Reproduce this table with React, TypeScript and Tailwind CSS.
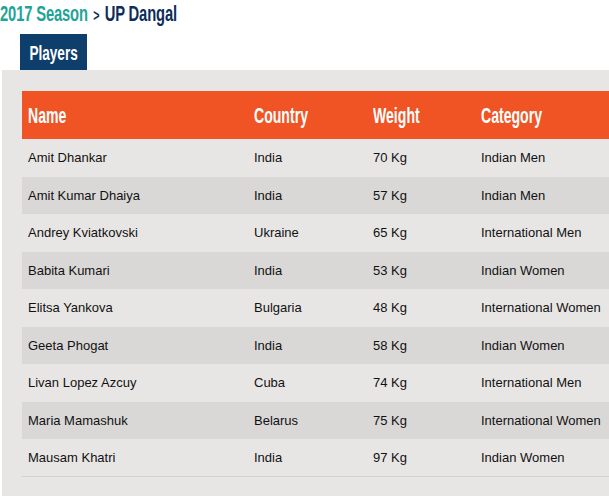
const players = [
  ["Amit Dhankar", "India", "70 Kg", "Indian Men"],
  ["Amit Kumar Dhaiya", "India", "57 Kg", "Indian Men"],
  ["Andrey Kviatkovski", "Ukraine", "65 Kg", "International Men"],
  ["Babita Kumari", "India", "53 Kg", "Indian Women"],
  ["Elitsa Yankova", "Bulgaria", "48 Kg", "International Women"],
  ["Geeta Phogat", "India", "58 Kg", "Indian Women"],
  ["Livan Lopez Azcuy", "Cuba", "74 Kg", "International Men"],
  ["Maria Mamashuk", "Belarus", "75 Kg", "International Women"],
  ["Mausam Khatri", "India", "97 Kg", "Indian Women"],
];

// no condensed family installed, so squeeze a bold sans horizontally
const condensed = "inline-block font-['Liberation_Sans',Arial,sans-serif] font-bold";

export default function App() {
  return (
    <div className="h-[496px] w-[609px] overflow-hidden bg-white">
      <div className="h-[34px] whitespace-nowrap">
        <div className={`${condensed} origin-left scale-x-[0.67] pt-[1px] text-[22px] leading-[26px] tracking-[-0.2px]`}>
          <span className="text-[#23a397]">2017 Season</span>
          <span className="mx-[8px] text-[16px] text-[#0d2d5a]">&gt;</span>
          <span className="text-[#0d2d5a]">UP Dangal</span>
        </div>
      </div>
      <div className="ml-5 flex h-9 w-[67px] items-center justify-center bg-[#0d3e6c]">
        <span className={`${condensed} origin-center scale-x-[0.68] pt-[1px] text-[20px] text-white`}>Players</span>
      </div>
      <div className="ml-[2px] h-[426px] overflow-hidden bg-[#e8e6e5] pl-5 pt-[21px]">
        <table className="w-[640px] table-fixed border-collapse font-['Liberation_Sans',Arial,sans-serif] text-[13px] text-[#111]">
          <thead>
            <tr className="h-12 bg-[#f05324] text-left">
              {["Name", "Country", "Weight", "Category"].map((h, i) => (
                <th
                  key={h}
                  className={`px-[6px] pt-[1px] ${["w-[226px]", "w-[119px]", "w-[108px]", "w-[187px]"][i]}`}
                >
                  <span className={`${condensed} origin-left scale-x-[0.64] whitespace-nowrap text-[22px] text-white`}>
                    {h}
                  </span>
                </th>
              ))}
            </tr>
          </thead>
          <tbody>
            {players.map((p, i) => (
              <tr
                key={p[0]}
                className={`h-[37.5px] ${i % 2 ? "bg-[#d9d8d7]" : "bg-[#e8e6e5]"} ${
                  i === players.length - 1 ? "border-b border-[#d3d2d1]" : ""
                }`}
              >
                {p.map((c, j) => (
                  <td key={j} className="whitespace-nowrap px-[6px]">
                    {c}
                  </td>
                ))}
              </tr>
            ))}
          </tbody>
        </table>
      </div>
    </div>
  );
}
